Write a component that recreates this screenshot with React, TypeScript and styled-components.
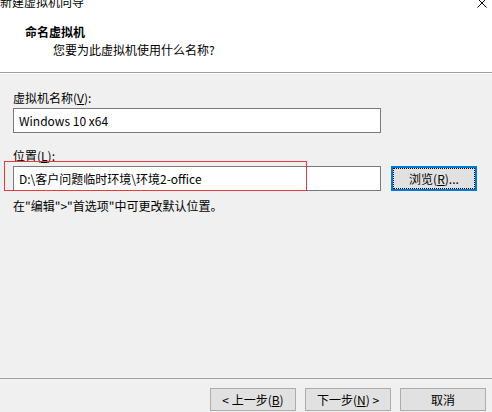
import React from "react";
import styled, { createGlobalStyle } from "styled-components";

const Global = createGlobalStyle`
  html, body { margin: 0; padding: 0; background: #f0f0f0; }
  body { font-family: "Noto Sans CJK SC", "Noto Sans", sans-serif; font-size: 12px; color: #000; }
  * { box-sizing: border-box; }
`;

const Window = styled.div`
  width: 492px;
  height: 412px;
  display: flex;
  flex-direction: column;
  overflow: hidden;
  background: #f0f0f0;
`;

const Header = styled.div`
  background: #fff;
  height: 73px;
  border-bottom: 1px solid #a0a0a0;
  display: flex;
  flex-direction: column;
`;

const TitleBar = styled.div`
  margin-top: -6px;
  height: 16px;
  line-height: 16px;
  display: flex;
  justify-content: space-between;
  align-items: center;
  padding: 0 5px 0 0;
`;

const Caption = styled.span`
  font-size: 12px;
  color: #000;
`;

const Close = styled.svg`
  width: 10px;
  height: 10px;
  margin-top: 2px;
`;

const Heading = styled.div`
  margin: 14px 0 0 25px;
  font-weight: bold;
  font-size: 12px;
  line-height: 16px;
`;

const Sub = styled.div`
  margin: 2px 0 0 53px;
  font-size: 12px;
  line-height: 16px;
`;

const Body = styled.div`
  flex: 1;
  display: flex;
  flex-direction: column;
  padding: 16px 11px 0 13px;
  border-top: 1px solid #fff;
`;

const Label = styled.div`
  line-height: 16px;
  height: 16px;
  margin-bottom: 2px;
`;

const Row = styled.div`
  position: relative;
  display: flex;
  align-items: center;
  gap: 10px;
  margin-bottom: 15px;
`;

const Field = styled.div`
  width: 368px;
  height: 25px;
  border: 1px solid #7a7a7a;
  background: #fff;
  padding: 0 5px;
  display: flex;
  align-items: center;
  font-size: 12px;
  white-space: nowrap;
`;

const Highlight = styled.div`
  position: absolute;
  left: -9px;
  top: -5px;
  width: 303px;
  height: 30px;
  border: 1.5px solid #e83a3a;
  pointer-events: none;
`;

const Button = styled.button<{ $focus?: boolean }>`
  width: 86px;
  height: ${(p) => (p.$focus ? "25px" : "23px")};
  font-family: inherit;
  font-size: 12px;
  color: #000;
  background: #e1e1e1;
  border: ${(p) => (p.$focus ? "2px solid #0078d7" : "1px solid #adadad")};
  padding: 0;
  display: flex;
  align-items: center;
  justify-content: center;
  position: relative;
  outline: ${(p) => (p.$focus ? "1px dotted #000" : "none")};
  outline-offset: ${(p) => (p.$focus ? "-3px" : "0")};
`;

const Hint = styled.div`
  line-height: 16px;
  margin-top: -8px;
`;

const Footer = styled.div`
  border-top: 1px solid #a0a0a0;
  display: flex;
  justify-content: flex-end;
  gap: 9px;
  padding: 9px 6px 0 0;
  height: 34px;
`;

export default function App() {
  return (
    <Window>
      <Global />
      <Header>
        <TitleBar>
          <Caption>新建虚拟机向导</Caption>
          <Close viewBox="0 0 10 10">
            <path d="M0.5 0.5 L9.5 9.5 M9.5 0.5 L0.5 9.5" stroke="#000" strokeWidth="1" />
          </Close>
        </TitleBar>
        <Heading>命名虚拟机</Heading>
        <Sub>您要为此虚拟机使用什么名称?</Sub>
      </Header>
      <Body>
        <Label>
          虚拟机名称(<u>V</u>):
        </Label>
        <Row>
          <Field>Windows 10 x64</Field>
        </Row>
        <Label>
          位置(<u>L</u>):
        </Label>
        <Row>
          <Field>D:\客户问题临时环境\环境2-office</Field>
          <Button $focus>
            浏览(<u>R</u>)...
          </Button>
          <Highlight />
        </Row>
        <Hint>在"编辑"&gt;"首选项"中可更改默认位置。</Hint>
      </Body>
      <Footer>
        <Button>
          &lt; 上一步(<u>B</u>)
        </Button>
        <Button>
          下一步(<u>N</u>) &gt;
        </Button>
        <Button>取消</Button>
      </Footer>
    </Window>
  );
}
